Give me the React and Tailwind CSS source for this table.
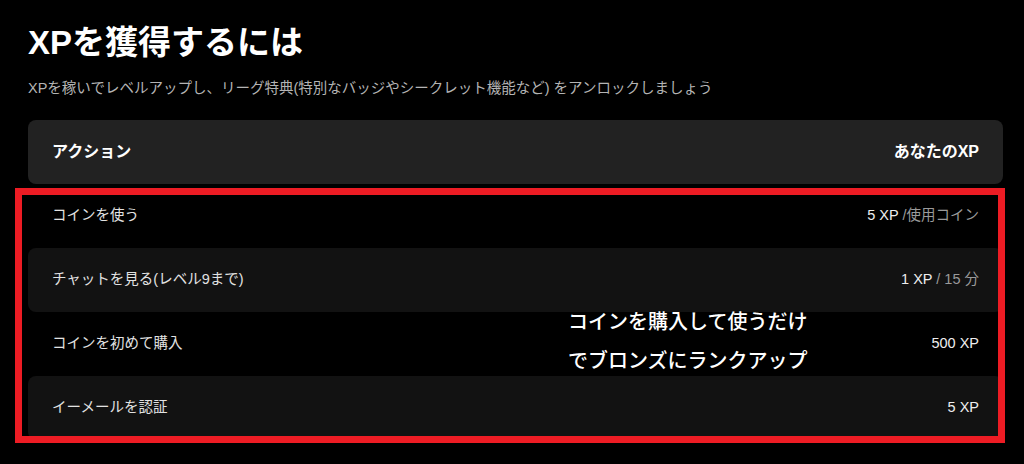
const rows = [
  { label: "コインを使う", xp: "5 XP", unit: " /使用コイン", alt: false },
  { label: "チャットを見る(レベル9まで)", xp: "1 XP", unit: " / 15 分", alt: true },
  { label: "コインを初めて購入", xp: "500 XP", unit: "", alt: false },
  { label: "イーメールを認証", xp: "5 XP", unit: "", alt: true },
];

const font = { fontFamily: '"Liberation Sans", "Noto Sans CJK JP", sans-serif' };

export default function App() {
  return (
    <div className="h-[464px] w-[1024px] overflow-hidden bg-black pl-[28px] pr-[21px] pt-[21px]" style={font}>
      <h1 className="text-[33px] font-bold leading-[44px] text-white">XPを獲得するには</h1>
      <p className="mt-[13px] text-[14.5px] leading-[20px] text-[#b4b4b4]">
        XPを稼いでレベルアップし、リーグ特典(特別なバッジやシークレット機能など) をアンロックしましょう
      </p>

      {/* Table header */}
      <div className="mt-[22px] flex h-[64px] items-center justify-between rounded-lg bg-[#222222] px-[24px] text-[16px] font-bold text-white">
        <span>アクション</span>
        <span>あなたのXP</span>
      </div>

      {/* Rows */}
      <div className="relative">
        {rows.map((r, i) => (
          <div
            key={i}
            className={`flex h-[64px] items-center justify-between rounded-lg px-[24px] text-[14.5px] ${r.alt ? "bg-[#121212]" : "bg-black"}`}
          >
            <span className="text-[#e2e2e2]">{r.label}</span>
            <span>
              <span className="text-[#eeeeee]">{r.xp}</span>
              {r.unit && <span className="text-[#9a9a9a]">{r.unit}</span>}
            </span>
          </div>
        ))}

        {/* Annotation */}
        <div className="pointer-events-none absolute -left-[13px] -right-[2px] top-[4px] -bottom-[3px] border-[7px] border-[#ed1c24]" />
        <div
          className="absolute left-[540px] top-[117px] text-[20px] font-medium leading-[39px] text-white"
          style={{ fontFamily: '"Noto Sans CJK JP", sans-serif' }}
        >
          <div>コインを購入して使うだけ</div>
          <div>でブロンズにランクアップ</div>
        </div>
      </div>
    </div>
  );
}
